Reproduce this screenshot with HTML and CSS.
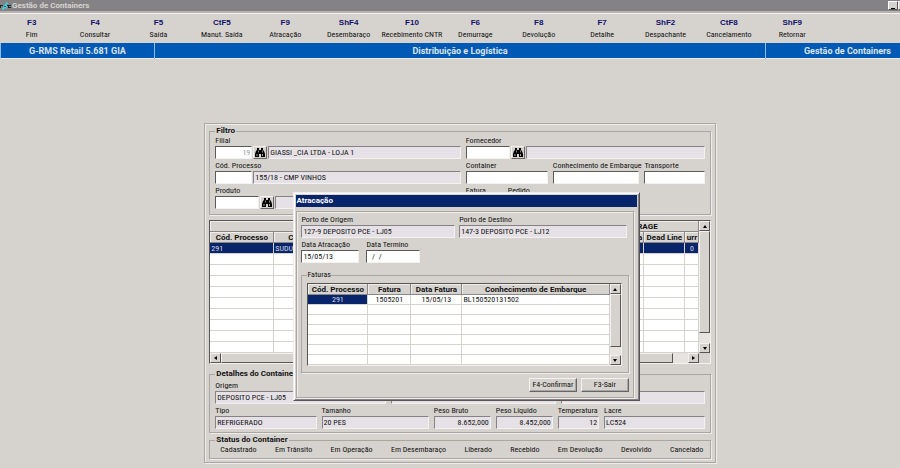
FILE: index.html
```html
<!DOCTYPE html>
<html lang="pt-BR">
<head>
<meta charset="utf-8">
<title>Gestão de Containers</title>
<link rel="stylesheet" href="styles.css">
</head>
<body>
<svg class="defs" aria-hidden="true">
  <symbol id="binoculars" viewBox="0 0 12 11">
    <path d="M3 1h2v2h2V1h2v2l1 1 1 3v3H7V7H5v3H1V7l1-3 1-1z"/>
    <path d="M2.500 7h1v2h-1zM8 7h1v2H8zM4 3.500h.8v2H4zM8 3.500h.8v2H8z" fill="#a8a6a2"/>
  </symbol>
</svg>

<header>
  <div class="titlebar">
    <svg class="logo" viewBox="0 0 11 10" aria-hidden="true">
      <path d="M7 1l1 1-2 2 2 1-2 1 1 2-2-1-2 2-1-1 2-2-1-1 2-1 1-2z" fill="#35e0e8"/>
      <path d="M0 4h3v1H1v2H0zM7 4h4v1H9v1h2v1H8V5H7z" fill="#152a2c"/>
      <path d="M4 5h2v1H4z" fill="#0b6f78"/>
    </svg>
    <h1>Gestão de Containers</h1>
    <button class="winbtn" aria-label="Minimizar"><span></span></button>
    <button class="winbtn" aria-label="Fechar"></button>
  </div>
  <nav class="menu">
    <a href="#"><b>F3</b>Fim</a>
    <a href="#"><b>F4</b>Consultar</a>
    <a href="#"><b>F5</b>Saída</a>
    <a href="#"><b>CtF5</b>Manut. Saída</a>
    <a href="#"><b>F9</b>Atracação</a>
    <a href="#"><b>ShF4</b>Desembaraço</a>
    <a href="#"><b>F10</b>Recebimento CNTR</a>
    <a href="#"><b>F6</b>Demurrage</a>
    <a href="#"><b>F8</b>Devolução</a>
    <a href="#"><b>F7</b>Detalhe</a>
    <a href="#"><b>ShF2</b>Despachante</a>
    <a href="#"><b>CtF8</b>Cancelamento</a>
    <a href="#"><b>ShF9</b>Retornar</a>
  </nav>
  <div class="banner">
    <span>G-RMS Retail 5.681 GIA</span>
    <span>Distribuição e Logística</span>
    <span class="module">Gestão de Containers</span>
  </div>
</header>

<main class="panel">
  <fieldset class="group filter">
    <legend>Filtro</legend>
    <div class="halves">
      <div class="line">
        <div class="field w-code"><label for="filial">Filial</label><input id="filial" class="num dim" value="19"></div>
        <button class="find" aria-label="Buscar filial"><svg><use href="#binoculars"/></svg></button>
        <input class="ro grow" aria-label="Nome da filial" readonly value="GIASSI _CIA LTDA - LOJA 1">
      </div>
      <div class="line">
        <div class="field w-search"><label for="forn">Fornecedor</label><input id="forn"></div>
        <button class="find" aria-label="Buscar fornecedor"><svg><use href="#binoculars"/></svg></button>
        <input class="ro grow" aria-label="Nome do fornecedor" readonly>
      </div>
      <div class="line">
        <div class="field w-code"><label for="proc">Cód. Processo</label><input id="proc"></div>
        <input class="ro grow" aria-label="Descrição do processo" readonly value="155/18 - CMP VINHOS">
      </div>
      <div class="line wide">
        <div class="field w-container"><label for="cont">Container</label><input id="cont"></div>
        <div class="field grow"><label for="conh">Conhecimento de Embarque</label><input id="conh"></div>
        <div class="field w-transp"><label for="transp">Transporte</label><input id="transp"></div>
      </div>
      <div class="line">
        <div class="field w-search"><label for="prod">Produto</label><input id="prod"></div>
        <button class="find" aria-label="Buscar produto"><svg><use href="#binoculars"/></svg></button>
        <input class="ro grow" aria-label="Nome do produto" readonly>
      </div>
      <div class="line wide">
        <div class="field w-code"><label for="fat">Fatura</label><input id="fat"></div>
        <div class="field w-code"><label for="ped">Pedido</label><input id="ped"></div>
      </div>
    </div>
  </fieldset>

  <div class="grid-box">
    <table class="grid main-grid">
      <colgroup><col class="c-proc"><col class="c-cont"><col><col class="c-dem"><col class="c-dead"><col class="c-cur"></colgroup>
      <thead>
        <tr><th colspan="3"></th><th colspan="3">DEMURRAGE</th></tr>
        <tr><th>Cód. Processo</th><th>Container</th><th></th><th class="r">Data</th><th>Dead Line</th><th>urr</th></tr>
      </thead>
      <tbody>
        <tr class="sel"><td>291</td><td>SUDU</td><td></td><td></td><td></td><td class="c">0</td></tr>
        <tr><td></td><td></td><td></td><td></td><td></td><td></td></tr>
        <tr><td></td><td></td><td></td><td></td><td></td><td></td></tr>
        <tr><td></td><td></td><td></td><td></td><td></td><td></td></tr>
        <tr><td></td><td></td><td></td><td></td><td></td><td></td></tr>
        <tr><td></td><td></td><td></td><td></td><td></td><td></td></tr>
        <tr><td></td><td></td><td></td><td></td><td></td><td></td></tr>
        <tr><td></td><td></td><td></td><td></td><td></td><td></td></tr>
        <tr><td></td><td></td><td></td><td></td><td></td><td></td></tr>
        <tr><td></td><td></td><td></td><td></td><td></td><td></td></tr>
      </tbody>
    </table>
    <div class="vbar"><i class="arrow up"></i><i class="thumb"></i><i class="track"></i><i class="arrow down"></i></div>
    <div class="hbar"><i class="arrow left"></i><i class="thumb"></i><i class="track"></i><i class="arrow right"></i></div>
    <div class="corner"></div>
  </div>

  <fieldset class="group details">
    <legend>Detalhes do Container</legend>
    <div class="places">
      <div class="field"><label for="orig">Origem</label><input id="orig" class="ro" readonly value="DEPOSITO PCE - LJ05"></div>
      <input class="ro" aria-label="Destino" readonly>
      <input class="ro" aria-label="Navio" readonly>
    </div>
    <div class="specs">
      <div class="field"><label for="tipo">Tipo</label><input id="tipo" class="ro" readonly value="REFRIGERADO"></div>
      <div class="field"><label for="tam">Tamanho</label><input id="tam" class="ro" readonly value="20 PES"></div>
      <div class="field"><label for="pb">Peso Bruto</label><input id="pb" class="ro num" readonly value="8.652,000"></div>
      <div class="field"><label for="pl">Peso Líquido</label><input id="pl" class="ro num" readonly value="8.452,000"></div>
      <div class="field"><label for="temp">Temperatura</label><input id="temp" class="ro num" readonly value="12"></div>
      <div class="field"><label for="lacre">Lacre</label><input id="lacre" class="ro" readonly value="LC524"></div>
    </div>
  </fieldset>

  <fieldset class="group status">
    <legend>Status do Container</legend>
    <div class="states">
      <span>Cadastrado</span><span>Em Trânsito</span><span>Em Operação</span><span>Em Desembaraço</span><span>Liberado</span><span>Recebido</span><span>Em Devolução</span><span>Devolvido</span><span>Cancelado</span>
    </div>
  </fieldset>
</main>

<section class="dialog" role="dialog" aria-labelledby="dlg">
  <h2 id="dlg">Atracação</h2>
  <div class="dialog-body">
    <div class="ports">
      <div class="field"><label for="po">Porto de Origem</label><input id="po" class="ro" readonly value="127-9 DEPOSITO PCE - LJ05"></div>
      <div class="field"><label for="pd">Porto de Destino</label><input id="pd" class="ro" readonly value="147-3 DEPOSITO PCE - LJ12"></div>
    </div>
    <div class="dates">
      <div class="field w-start"><label for="da">Data Atracação</label><input id="da" value="15/05/13"></div>
      <div class="field w-end"><label for="dt">Data Termino</label><input id="dt" value="  /  /"></div>
    </div>
    <fieldset class="group invoices">
      <legend>Faturas</legend>
      <div class="grid-box">
        <table class="grid">
          <colgroup><col class="i-proc"><col class="i-fat"><col class="i-data"><col></colgroup>
          <thead><tr><th>Cód. Processo</th><th>Fatura</th><th>Data Fatura</th><th>Conhecimento de Embarque</th></tr></thead>
          <tbody>
            <tr><td class="c sel">291</td><td class="c">1505201</td><td class="c">15/05/13</td><td>BL150520131502</td></tr>
            <tr><td></td><td></td><td></td><td></td></tr>
            <tr><td></td><td></td><td></td><td></td></tr>
            <tr><td></td><td></td><td></td><td></td></tr>
            <tr><td></td><td></td><td></td><td></td></tr>
            <tr><td></td><td></td><td></td><td></td></tr>
            <tr><td></td><td></td><td></td><td></td></tr>
          </tbody>
        </table>
        <div class="vbar"><i class="arrow up"></i><i class="thumb"></i><i class="track"></i><i class="arrow down"></i></div>
      </div>
    </fieldset>
    <div class="actions"><button>F4-Confirmar</button><button>F3-Sair</button></div>
  </div>
</section>
</body>
</html>
```

FILE: styles.css
```css
:root {
  --face: #d6d3ce;
  --shadow: #848284;
  --edge: #a9a7a5;
  --navy: #08246b;
  --readonly: #e6e1e6;
}
* { box-sizing: border-box; }
body {
  margin: 0;
  position: relative;
  min-height: 100vh;
  background: var(--face);
  color: #111;
  font: 8px/10px "Roboto Condensed", Roboto, "Liberation Sans", sans-serif;
}
input, button { font: inherit; color: inherit; margin: 0; }
.defs { display: none; }

.titlebar {
  display: flex;
  align-items: center;
  height: 11px;
  overflow: hidden;
  background: var(--shadow);
  color: var(--face);
}
.logo { width: 11px; height: 10px; margin-right: 1px; }
h1, h2, .banner, b, legend, th { font-family: Roboto, "Liberation Sans", sans-serif; font-weight: bold; }
h1 { flex: 1; margin: 0; font-size: 8px; }
.winbtn {
  flex: none;
  width: 10px;
  height: 9px;
  padding: 0;
  border: 1px solid;
  border-color: #fff #555 #555 #fff;
  background: var(--face);
}
.winbtn:last-child { margin-right: -8px; }
.winbtn span { display: block; width: 4px; height: 1px; margin: 5px 0 0 2px; background: #000; }

.menu {
  display: grid;
  grid-template-columns: repeat(13, minmax(0, 5fr)) minmax(0, 6fr);
  height: 32px;
  padding-top: 5px;
  border-top: 2px solid #b5b2b0;
  box-shadow: inset 0 1px #f4f3f1;
}
.menu a { color: inherit; text-align: center; text-decoration: none; white-space: nowrap; }
.menu b { display: block; margin-bottom: 2px; color: #10106b; font-family: "Liberation Sans", sans-serif; }
.banner {
  display: grid;
  grid-template-columns: 17fr 68fr 15fr;
  height: 16px;
  border-bottom: 1px solid #eee;
  border-left: 1px solid #8fbce8;
  background: #005ab5;
  color: #dce4ec;
  font-size: 9px;
  line-height: 16px;
  text-align: center;
}
.banner span + span { border-left: 1px solid #8fbce8; }
.banner .module { padding-right: 9px; text-align: right; }

.panel {
  margin: 64px 20.4% 0 22.7%;
  padding: 2px 4px 3px;
  border: 1px solid var(--edge);
  box-shadow: inset 1px 1px #efedea, 1px 1px #efedea;
}
.group {
  min-width: 0;
  margin: 0;
  padding: 2px 5px 3px;
  border: 1px solid var(--edge);
  box-shadow: 1px 1px #efedea;
}
.filter { padding: 0 5px 5px; }
legend { padding: 0 1px; font-size: 8px; line-height: 10px; color: #111; }
.halves { display: grid; grid-template-columns: minmax(0, 246fr) minmax(0, 240fr); gap: 2px 5px; }
.line { display: flex; align-items: flex-end; gap: 1px; min-width: 0; }
.line.wide { gap: 5px; }
.field { display: flex; flex-direction: column; min-width: 0; }
.field label { height: 10px; white-space: nowrap; }
.grow { flex: 1; }
input {
  width: 100%;
  min-width: 0;
  height: 13px;
  padding: 0 1px;
  border: 1px solid;
  border-color: #5a5a5a #f4f2f0 #f4f2f0 #5a5a5a;
  background: #fff;
}
input.ro { border-top-color: var(--shadow); border-left-color: var(--shadow); background: var(--readonly); }
.num { text-align: right; }
.dim { color: #999; }
.w-code { width: 37px; }
.w-search { width: 44px; }
.w-container { width: 82px; }
.w-transp { width: 61px; }
.find {
  flex: none;
  width: 14px;
  height: 13px;
  padding: 0;
  border: 1px solid;
  border-color: #f4f2f0 #666 #666 #f4f2f0;
  background: var(--face);
}
.find svg { display: block; width: 12px; height: 11px; }

.grid-box {
  display: grid;
  grid-template-columns: 1fr 11px;
  border: 1px solid;
  border-color: #555 #f4f2f0 #f4f2f0 #555;
}
.panel > .grid-box { margin: 5px 0; }
.grid { width: 100%; table-layout: fixed; border-collapse: separate; border-spacing: 0; background: #fff; }
.grid th, .grid td {
  height: 11px;
  padding: 0 1px;
  overflow: hidden;
  line-height: 9px;
  white-space: nowrap;
  text-align: left;
  border-right: 1px solid #d6d3ce;
  border-bottom: 1px solid #d6d3ce;
}
.grid th { background: var(--face); color: #111; text-align: center; border-color: #8a8886; box-shadow: inset 1px 1px #f0eeea; }
.grid th.r { text-align: right; }
.grid .c { text-align: center; }
.grid .sel, .sel { background: var(--navy); color: #d8dcea; }
.c-proc { width: 64px; }
.c-cont { width: 64px; }
.c-dem { width: 75px; }
.c-dead { width: 41px; }
.c-cur { width: 14px; }

.vbar, .hbar { display: flex; background: #e6e3e0; }
.vbar { flex-direction: column; }
.corner { background: var(--face); }
.arrow, .thumb {
  display: block;
  border: 1px solid;
  border-color: #f4f2f0 #555 #555 #f4f2f0;
  background: var(--face);
}
.arrow { display: grid; place-items: center; flex: none; width: 11px; height: 10px; }
.thumb { flex: 6; }
.track { flex: 1; }
.main-grid + .vbar .thumb { flex: 10; }
.hbar .thumb { flex: 30; }
.arrow::before { content: ""; border: 2px solid transparent; }
.up::before { border-top: 0; border-bottom: 3px solid #000; }
.down::before { border-bottom: 0; border-top: 3px solid #000; }
.left::before { border-left: 0; border-right: 3px solid #000; }
.right::before { border-right: 0; border-left: 3px solid #000; }

.places, .specs { display: grid; gap: 5px; align-items: end; }
.places { grid-template-columns: 171fr 166fr 145fr; margin-bottom: 2px; }
.specs { grid-template-columns: 103fr 109fr 58fr 58fr 42fr 103fr; }
.status { margin-top: 2px; padding-top: 0; }
.states { display: flex; justify-content: space-between; padding: 0 2px 0 5px; white-space: nowrap; }

.dialog {
  position: absolute;
  top: 192px;
  left: 32.6%;
  width: 38.5%;
  padding: 2px;
  border: 1px solid;
  border-color: #efedea #555 #555 #efedea;
  box-shadow: inset 1px 1px #fff, inset -1px -1px var(--shadow);
  background: var(--face);
}
h2 { margin: 0 0 4px; font-size: 8px; line-height: 12px; background: var(--navy); color: #fff; }
.dialog-body { margin-right: 3px; padding: 3px 4px 5px; border: 1px solid var(--edge); box-shadow: inset 1px 1px #efedea, 1px 1px #efedea; }
.ports { display: grid; grid-template-columns: 155fr 169fr; gap: 4px; margin-bottom: 2px; padding-right: 2px; }
.dates { display: flex; gap: 7px; margin-bottom: 7px; }
#dt { white-space: pre; }
.w-start { width: 58px; }
.w-end { width: 54px; }
.invoices { padding: 3px 6px 6px 5px; }
.invoices legend { padding: 0; font-family: inherit; font-weight: normal; }
.invoices .grid th { height: 11px; }
.invoices .grid td { height: 10px; }
.i-proc { width: 60px; }
.i-fat { width: 43px; }
.i-data { width: 51px; }
.actions { display: flex; justify-content: flex-end; gap: 4px; margin-top: 5px; }
.actions button {
  width: 48px;
  height: 14px;
  padding: 0;
  border: 1px solid;
  border-color: #f4f2f0 #666 #666 #f4f2f0;
  box-shadow: inset -1px -1px #aaa8a5;
  background: var(--face);
  line-height: 12px;
  white-space: nowrap;
}
```
